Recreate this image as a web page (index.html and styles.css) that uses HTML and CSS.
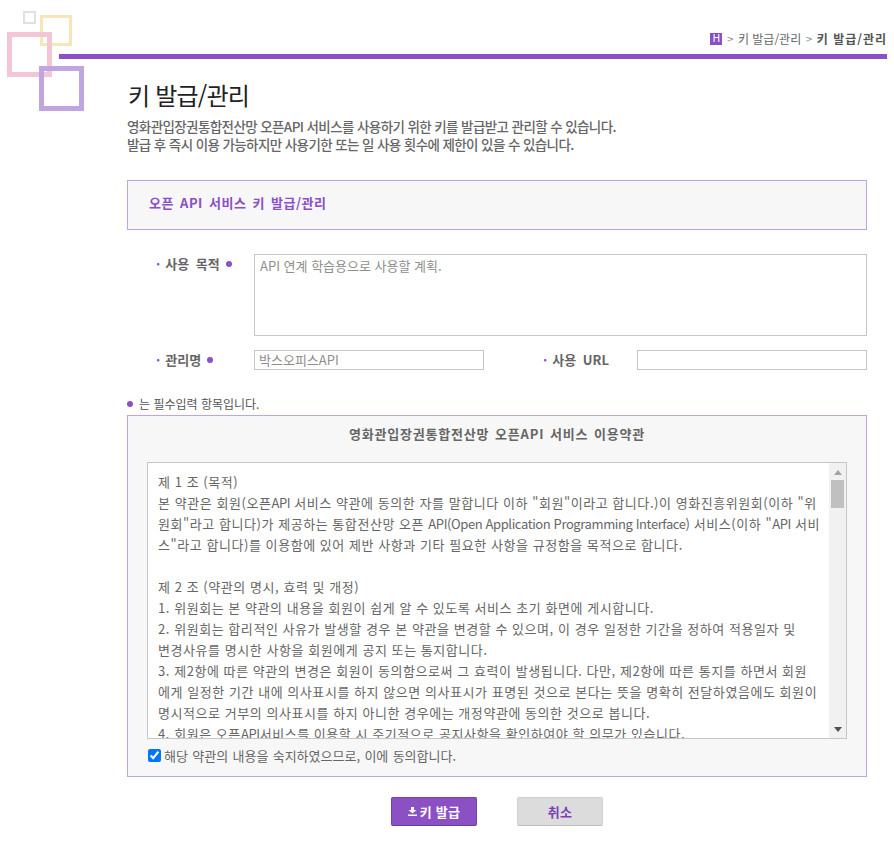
FILE: index.html
```html
<!DOCTYPE html>
<html lang="ko">
<head>
<meta charset="utf-8">
<title>키 발급/관리</title>
<link rel="stylesheet" href="styles.css">
</head>
<body>
<div class="page">
  <svg class="deco" width="84" height="111" viewBox="0 0 84 111" aria-hidden="true">
    <rect x="24" y="12" width="11" height="11" fill="none" stroke="#e0e0e0" stroke-width="2"/>
    <rect x="41.5" y="16.5" width="29" height="28" fill="none" stroke="#f8e6b6" stroke-width="3"/>
    <rect x="9.5" y="34.5" width="40" height="40" fill="none" stroke="#f3c6d5" stroke-width="5"/>
    <rect x="41.5" y="68.5" width="40" height="40" fill="none" stroke="#c1a5e0" stroke-width="5"/>
  </svg>
  <header class="top">
    <nav class="crumbs">
      <span class="home">H</span><span class="sep">&gt;</span><span>키 발급/관리</span><span class="sep">&gt;</span><b>키 발급/관리</b>
    </nav>
    <div class="rule"></div>
  </header>
  <main class="content">
    <h1>키 발급/관리</h1>
    <p class="lead">영화관입장권통합전산망 오픈API 서비스를 사용하기 위한 키를 발급받고 관리할 수 있습니다.<br>발급 후 즉시 이용 가능하지만 사용기한 또는 일 사용 횟수에 제한이 있을 수 있습니다.</p>
    <h2 class="section">오픈 API 서비스 키 발급/관리</h2>
    <form class="form">
      <div class="row row-purpose">
        <label class="label"><span class="tick">·</span>사용 목적<i class="dot"></i></label>
        <div class="field-text">API 연계 학습용으로 사용할 계획.</div>
      </div>
      <div class="row row-name">
        <label class="label"><span class="tick">·</span>관리명<i class="dot"></i></label>
        <div class="field-input">박스오피스API</div>
        <label class="label label-url"><span class="tick">·</span>사용 URL</label>
        <div class="field-input field-url"></div>
      </div>
      <p class="required"><i class="dot dot-first"></i>는 필수입력 항목입니다.</p>
      <section class="terms">
        <h3>영화관입장권통합전산망 오픈API 서비스 이용약관</h3>
        <div class="termsbox">
          <div class="termstext">
            <p>제 1 조 (목적)</p>
            <p>본 약관은 회원(오픈<span class="latin">API</span> 서비스 약관에 동의한 자를 말합니다 이하 "회원"이라고 합니다.)이 영화진흥위원회(이하 "위</p>
            <p>원회"라고 합니다)가 제공하는 통합전산망 오픈 <span class="latin">API(Open Application Programming Interface)</span> 서비스(이하 "<span class="latin">API</span> 서비</p>
            <p>스"라고 합니다)를 이용함에 있어 제반 사항과 기타 필요한 사항을 규정함을 목적으로 합니다.</p>
            <p>&nbsp;</p>
            <p>제 2 조 (약관의 명시, 효력 및 개정)</p>
            <p>1. 위원회는 본 약관의 내용을 회원이 쉽게 알 수 있도록 서비스 초기 화면에 게시합니다.</p>
            <p>2. 위원회는 합리적인 사유가 발생할 경우 본 약관을 변경할 수 있으며, 이 경우 일정한 기간을 정하여 적용일자 및</p>
            <p>변경사유를 명시한 사항을 회원에게 공지 또는 통지합니다.</p>
            <p>3. 제2항에 따른 약관의 변경은 회원이 동의함으로써 그 효력이 발생됩니다. 다만, 제2항에 따른 통지를 하면서 회원</p>
            <p>에게 일정한 기간 내에 의사표시를 하지 않으면 의사표시가 표명된 것으로 본다는 뜻을 명확히 전달하였음에도 회원이</p>
            <p>명시적으로 거부의 의사표시를 하지 아니한 경우에는 개정약관에 동의한 것으로 봅니다.</p>
            <p>4. 회원은 오픈<span class="latin">API</span>서비스를 이용할 시 주기적으로 공지사항을 확인하여야 할 의무가 있습니다.</p>
          </div>
          <div class="scroll">
            <svg class="arrow" width="8" height="5" viewBox="0 0 8 5"><path d="M4 0 8 5H0Z" fill="#a3a3a3"/></svg>
            <div class="thumb"></div>
            <svg class="arrow arrow-down" width="8" height="5" viewBox="0 0 8 5"><path d="M0 0H8L4 5Z" fill="#505050"/></svg>
          </div>
        </div>
        <label class="agree"><input type="checkbox" checked>해당 약관의 내용을 숙지하였으므로, 이에 동의합니다.</label>
      </section>
      <div class="actions">
        <button type="button" class="btn btn-primary"><svg width="9" height="9" viewBox="0 0 9 9"><path d="M3 0H6V3H8.5L4.5 6.5 .5 3H3ZM0 7.5H9V9H0Z" fill="#fff"/></svg>키 발급</button>
        <button type="button" class="btn btn-cancel">취소</button>
      </div>
    </form>
  </main>
</div>
</body>
</html>
```
FILE: styles.css
```css
* { box-sizing: border-box; }
html, body { margin: 0; padding: 0; background: #fff; }
body { font-family: "Noto Sans CJK KR", "Noto Sans", sans-serif; font-size: 12px; color: #666; overflow: hidden; }
p, h1, h2, h3 { margin: 0; }
.page { position: relative; width: 887px; height: 854px; }
.deco { position: absolute; left: 0; top: 0; }
.top { padding: 31px 0 0 59px; }
.crumbs { display: flex; justify-content: flex-end; align-items: center; height: 16px; gap: 4px; font-size: 12px; line-height: 16px; color: #666; white-space: nowrap; }
.crumbs b { color: #555; letter-spacing: 1px; }
.home { width: 12px; height: 12px; background: #8a50c4; color: #fff; font: 10px/12px "Liberation Sans", sans-serif; text-align: center; }
.sep { font: 9px/16px "DejaVu Sans", sans-serif; color: #888; }
.rule { height: 5px; margin-top: 7px; background: #8a50c4; }
.content { padding: 0 20px 0 127px; }
h1 { margin-top: 18px; padding-left: 1px; font-size: 24px; line-height: 36px; font-weight: 400; letter-spacing: -.8px; color: #222; }
.lead { margin-top: 5px; font-size: 13.5px; line-height: 17.5px; letter-spacing: -.6px; color: #666; font-weight: 500; }
.section { margin-top: 27px; height: 50px; padding-left: 21px; border: 1px solid #bfa5e0; background: #f7f7f7; font-size: 13px; line-height: 44px; font-weight: 700; letter-spacing: .5px; word-spacing: 2px; color: #8a4fc7; }
.form { display: block; }
.row { display: flex; align-items: flex-start; }
.row-purpose { margin-top: 24px; }
.row-name { margin-top: 14px; }
.label { display: block; width: 127px; padding-left: 29px; font-size: 13px; line-height: 19px; font-weight: 700; word-spacing: 3px; color: #666; white-space: nowrap; }
.label-url { width: 153px; padding-left: 59px; }
.tick { color: #8a50c4; margin-right: 5px; font-weight: 700; }
.dot { display: inline-block; width: 6px; height: 6px; margin-left: 6px; border-radius: 50%; background: #8a50c4; vertical-align: 2px; }
.dot-first { margin: 0 6px 0 0; }
.field-text { flex: 1; height: 82px; padding: 2px 5px; border: 1px solid #c6c6c6; font-size: 13px; line-height: 18px; color: #8e8e8e; }
.field-input { width: 230px; height: 20px; padding: 0 4px; border: 1px solid #c6c6c6; font-size: 13px; line-height: 18px; color: #8e8e8e; }
.required { margin-top: 25px; font-size: 12px; line-height: 18px; color: #555; }
.terms { height: 362px; margin-top: 2px; padding: 0 19px; border: 1px solid #bfa5e0; background: #f7f7f7; }
.terms h3 { padding-top: 8px; height: 46px; font-size: 13px; line-height: 20px; font-weight: 700; letter-spacing: .8px; word-spacing: 1.3px; text-align: center; color: #666; }
.termsbox { display: flex; height: 277px; border: 1px solid #c6c6c6; background: #fff; overflow: hidden; }
.termstext { flex: 1; padding: 8px 10px 0; overflow: hidden; font-size: 13px; line-height: 21px; letter-spacing: .55px; color: #666; white-space: nowrap; }
.latin { letter-spacing: -.4px; }
.scroll { display: flex; flex-direction: column; align-items: center; width: 17px; background: #f1f1f1; flex: none; }
.arrow { margin-top: 7px; flex: none; }
.thumb { width: 13px; height: 28px; margin-top: 5px; background: #c0c0c0; }
.arrow-down { margin-top: auto; margin-bottom: 6px; }
.agree { display: flex; align-items: center; height: 32px; font-size: 13px; word-spacing: .7px; color: #666; }
.agree input { width: 13px; height: 13px; margin: 0 3px 0 1px; accent-color: #0075ff; }
.actions { display: flex; justify-content: center; gap: 40px; margin-top: 20px; }
.btn { display: flex; align-items: center; justify-content: center; gap: 3px; width: 86px; height: 29px; padding: 0; border-radius: 2px; font-family: inherit; font-size: 13px; font-weight: 700; letter-spacing: .3px; }
.btn-primary { border: 1px solid #7a3fb5; border-bottom-color: #6a3aa0; background: #8a50c4; color: #fff; }
.btn-cancel { border: 1px solid #cfcfcf; border-bottom-color: #bdbdbd; background: #dcdcdc; color: #7c3fb8; }
```
